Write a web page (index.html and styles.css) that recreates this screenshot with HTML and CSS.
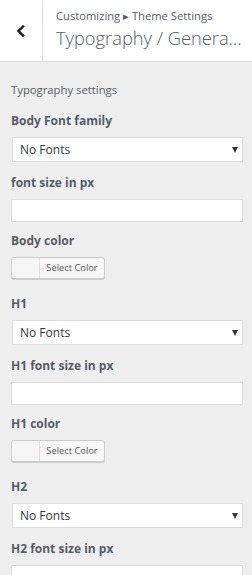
FILE: index.html
```html
<!DOCTYPE html>
<html lang="en">
<head>
<meta charset="utf-8">
<title>Customizer</title>
<link rel="stylesheet" href="styles.css">
</head>
<body>
<div class="panel">
  <header class="head">
    <button class="back" aria-label="Back">
      <svg width="10" height="12" viewBox="0 0 10 12"><polyline points="7,1.5 2.5,6 7,10.5" fill="none" stroke="#191e23" stroke-width="2.4" stroke-linecap="square"/></svg>
    </button>
    <div class="titles">
      <div class="crumbs">Customizing ▸ Theme Settings</div>
      <h2 class="title">Typography / General Settings</h2>
    </div>
  </header>
  <main class="body">
    <p class="desc">Typography settings</p>

    <div class="control ctl-select">
      <label class="label">Body Font family</label>
      <div class="select"><span>No Fonts</span><i class="arrow"></i></div>
    </div>
    <div class="control ctl-input">
      <label class="label">font size in px</label>
      <input class="input" type="text">
    </div>
    <div class="control ctl-color">
      <label class="label">Body color</label>
      <button class="color-btn"><span class="swatch"></span><span class="color-text">Select Color</span></button>
    </div>

    <div class="control ctl-select">
      <label class="label">H1</label>
      <div class="select"><span>No Fonts</span><i class="arrow"></i></div>
    </div>
    <div class="control ctl-input">
      <label class="label">H1 font size in px</label>
      <input class="input" type="text">
    </div>
    <div class="control ctl-color">
      <label class="label">H1 color</label>
      <button class="color-btn"><span class="swatch"></span><span class="color-text">Select Color</span></button>
    </div>

    <div class="control ctl-select">
      <label class="label">H2</label>
      <div class="select"><span>No Fonts</span><i class="arrow"></i></div>
    </div>
    <div class="control ctl-input">
      <label class="label">H2 font size in px</label>
      <input class="input" type="text">
    </div>
  </main>
</div>
</body>
</html>
```
FILE: styles.css
```css
* { box-sizing: border-box; }
html, body { margin: 0; padding: 0; }
body {
  background: #eeeeee;
  font-family: "Open Sans", "Noto Sans", sans-serif;
  color: #555d66;
  width: 252px;
  height: 575px;
  overflow: hidden;
}
.head {
  display: flex;
  height: 62px;
  background: #fff;
  border-bottom: 1px solid #dddddd;
}
.back {
  width: 43px;
  flex: none;
  border: 0;
  border-right: 1px solid #dddddd;
  background: #fff;
  padding: 0;
  display: flex;
  align-items: center;
  justify-content: center;
}
.titles {
  padding: 8px 10px 0 13px;
  min-width: 0;
  flex: 1;
}
.crumbs {
  font-size: 11.2px;
  line-height: 15px;
  color: #555d66;
  white-space: nowrap;
}
.title {
  margin: 3px 0 0;
  font-size: 18.3px;
  font-weight: 300;
  line-height: 24px;
  color: #555d66;
  white-space: nowrap;
  overflow: hidden;
  text-overflow: ellipsis;
}
.body {
  padding: 20px 9px 0 11px;
}
.desc {
  margin: 0 0 14px;
  font-size: 11.3px;
  line-height: 16px;
  color: #555d66;
}
.control { margin-bottom: 12px; }
.ctl-select { margin-bottom: 11.5px; }
.ctl-input { margin-bottom: 10px; }
.ctl-color { margin-bottom: 16px; }
.label {
  display: block;
  font-size: 12px;
  font-weight: 700;
  line-height: 18px;
  margin-bottom: 7px;
  color: #555d66;
}
.select {
  position: relative;
  height: 25px;
  margin-left: 1px;
  background: #fff;
  border: 1px solid #dddddd;
  font-size: 12px;
  color: #32373c;
  padding: 0 0 0 7px;
  display: flex;
  align-items: center;
}
.arrow {
  position: absolute;
  right: 4px;
  top: 9px;
  width: 0;
  height: 0;
  border-left: 3px solid transparent;
  border-right: 3px solid transparent;
  border-top: 6px solid #32373c;
}
.input {
  display: block;
  width: 100%;
  height: 23.5px;
  border: 1px solid #dddddd;
  background: #fff;
  margin: 0;
  padding: 0 6px;
  font: inherit;
}
.color-btn {
  display: flex;
  height: 22px;
  width: 94px;
  padding: 0;
  border: 1px solid #cccccc;
  border-radius: 3px;
  background: #f7f7f7;
  box-shadow: 0 1px 0 #cccccc;
  overflow: hidden;
  font-family: inherit;
}
.swatch {
  width: 28px;
  height: 100%;
  border-right: 1px solid #dddddd;
  background: #f5f5f5;
}
.color-text {
  flex: 1;
  font-size: 9.3px;
  line-height: 20px;
  color: #555555;
  text-align: center;
}
```
